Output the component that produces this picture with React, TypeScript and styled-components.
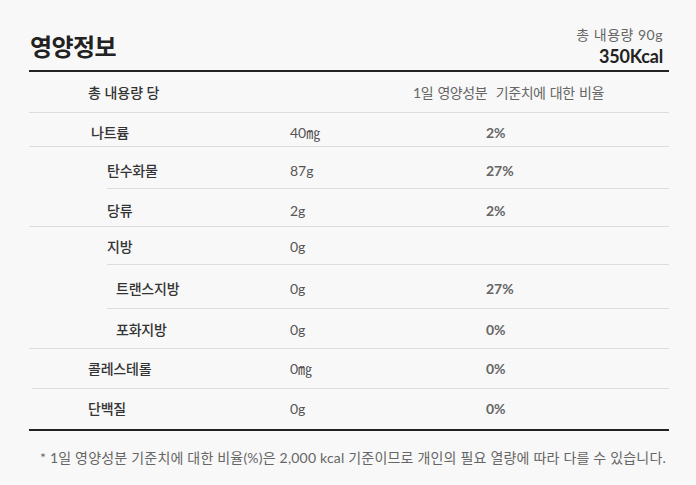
import React from "react";
import styled, { createGlobalStyle } from "styled-components";

const Global = createGlobalStyle`
  html, body { margin: 0; padding: 0; background: #f8f8f8; }
  body { font-family: Lato, "Noto Sans CJK KR", sans-serif; color: #333; }
  * { box-sizing: border-box; }
`;

const Page = styled.div`
  width: 696px;
  height: 485px;
  padding: 0 27px 0 29px;
  background: #f8f8f8;
`;

const Header = styled.header`
  display: flex;
  justify-content: space-between;
  align-items: flex-end;
  height: 72px;
  padding: 0 6px 2px 1px;
  border-bottom: 2px solid #222;
`;

const Title = styled.h1`
  margin: 0 0 7px;
  font-family: "Noto Sans CJK KR", sans-serif;
  font-size: 24px;
  font-weight: 700;
  line-height: 30px;
  color: #222;
  letter-spacing: -0.6px;
`;

const Summary = styled.div`
  display: flex;
  flex-direction: column;
  align-items: flex-end;
  margin-bottom: 1px;
`;

const Amount = styled.span`
  font-size: 14px;
  line-height: 20px;
  color: #666;
  letter-spacing: 0.5px;
`;

const Kcal = styled.span`
  font-size: 18px;
  line-height: 22px;
  font-weight: 700;
  color: #222;
  letter-spacing: -0.2px;
`;

const Row = styled.div<{ $h: number; $pt: number; $indent?: number; $thick?: boolean }>`
  display: grid;
  grid-template-columns: 261px 196px 1fr;
  height: ${(p) => p.$h}px;
  padding-top: ${(p) => p.$pt}px;
  background: ${(p) => (p.$thick ? "linear-gradient(#222, #222)" : "linear-gradient(#dcdcdc, #dcdcdc)")} no-repeat;
  background-size: calc(100% - ${(p) => p.$indent ?? 0}px) ${(p) => (p.$thick ? 2 : 1)}px;
  background-position: right bottom;
`;

const HeadRow = styled.div`
  display: grid;
  grid-template-columns: 1fr 256px;
  height: 41px;
  padding-top: 11px;
  background: linear-gradient(#dcdcdc, #dcdcdc) no-repeat;
  background-size: 100% 1px;
  background-position: left bottom;
`;

const HeadLeft = styled.span`
  padding-left: 59px;
  font-size: 14px;
  line-height: 20px;
  font-weight: 500;
  color: #333;
`;

const HeadRight = styled.span`
  font-size: 14px;
  line-height: 20px;
  color: #666;
  letter-spacing: -0.4px;
  word-spacing: 1px;
`;

const Label = styled.span<{ $pad: number }>`
  padding-left: ${(p) => p.$pad}px;
  font-size: 14px;
  line-height: 20px;
  font-weight: 500;
  color: #333;
  letter-spacing: -0.2px;
`;

const Value = styled.span`
  font-size: 14px;
  line-height: 20px;
  color: #555;
`;

const Percent = styled.span`
  font-size: 14px;
  line-height: 20px;
  color: #666;
  font-weight: 700;
`;

const Note = styled.p`
  margin: 17px 0 0 11px;
  font-size: 14px;
  line-height: 20px;
  color: #666;
  letter-spacing: 0.2px;
  white-space: nowrap;
`;

type Item = {
  name: string;
  value: string;
  pct: string;
  pad: number;
  h: number;
  pt: number;
  indent?: number;
  thick?: boolean;
};

const items: Item[] = [
  { name: "나트륨", value: "40㎎", pct: "2%", pad: 62, h: 34, pt: 10 },
  { name: "탄수화물", value: "87g", pct: "27%", pad: 78, h: 42, pt: 14, indent: 78 },
  { name: "당류", value: "2g", pct: "2%", pad: 78, h: 38, pt: 12 },
  { name: "지방", value: "0g", pct: "", pad: 78, h: 38, pt: 10, indent: 78 },
  { name: "트랜스지방", value: "0g", pct: "27%", pad: 87, h: 44, pt: 14, indent: 78 },
  { name: "포화지방", value: "0g", pct: "0%", pad: 87, h: 40, pt: 11 },
  { name: "콜레스테롤", value: "0㎎", pct: "0%", pad: 59, h: 40, pt: 10, indent: 3 },
  { name: "단백질", value: "0g", pct: "0%", pad: 59, h: 42, pt: 10, thick: true },
];

export default function App() {
  return (
    <Page>
      <Global />
      <Header>
        <Title>영양정보</Title>
        <Summary>
          <Amount>총 내용량 90g</Amount>
          <Kcal>350Kcal</Kcal>
        </Summary>
      </Header>
      <HeadRow>
        <HeadLeft>총 내용량 당</HeadLeft>
        <HeadRight>1일 영양성분&nbsp; 기준치에 대한 비율</HeadRight>
      </HeadRow>
      {items.map((it) => (
        <Row key={it.name} $h={it.h} $pt={it.pt} $indent={it.indent} $thick={it.thick}>
          <Label $pad={it.pad}>{it.name}</Label>
          <Value>{it.value}</Value>
          <Percent>{it.pct}</Percent>
        </Row>
      ))}
      <Note>* 1일 영양성분 기준치에 대한 비율(%)은 2,000 kcal 기준이므로 개인의 필요 열량에 따라 다를 수 있습니다.</Note>
    </Page>
  );
}
